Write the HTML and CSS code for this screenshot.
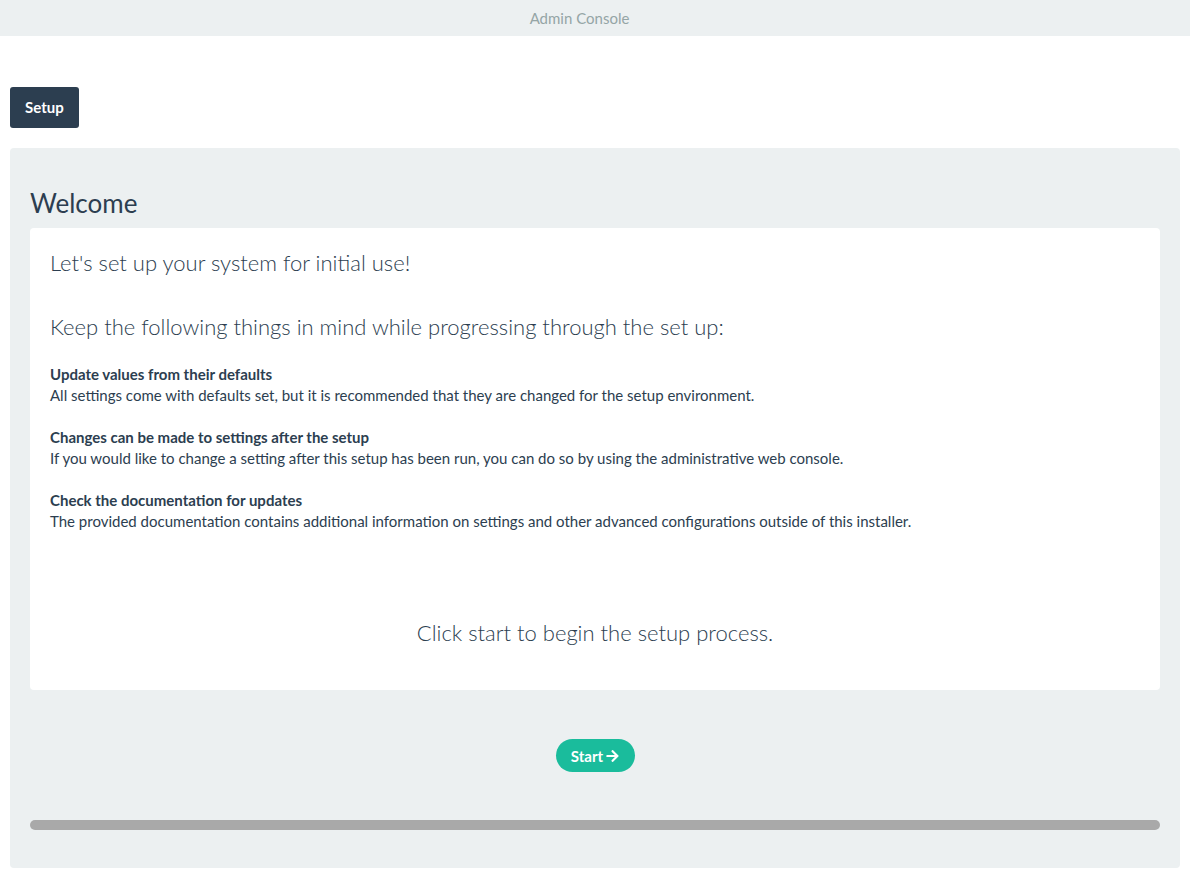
FILE: index.html
```html
<!DOCTYPE html>
<html>
<head>
<meta charset="utf-8">
<link rel="stylesheet" href="styles.css">
</head>
<body>
<header class="topbar">Admin Console</header>
<main class="page">
  <div class="tabs"><button class="tab">Setup</button></div>
  <section class="panel">
    <h1 class="panel-title">Welcome</h1>
    <div class="card">
      <p class="lead">Let's set up your system for initial use!</p>
      <p class="lead lead-2">Keep the following things in mind while progressing through the set up:</p>
      <div class="note">
        <strong>Update values from their defaults</strong>
        <span>All settings come with defaults set, but it is recommended that they are changed for the setup environment.</span>
      </div>
      <div class="note">
        <strong>Changes can be made to settings after the setup</strong>
        <span>If you would like to change a setting after this setup has been run, you can do so by using the administrative web console.</span>
      </div>
      <div class="note">
        <strong>Check the documentation for updates</strong>
        <span>The provided documentation contains additional information on settings and other advanced configurations outside of this installer.</span>
      </div>
      <p class="lead lead-center">Click start to begin the setup process.</p>
    </div>
    <div class="actions">
      <button class="start">Start <svg class="arrow" viewBox="0 0 448 512" width="13" height="14"><path fill="currentColor" d="M190.5 66.9l22.2-22.2c9.4-9.4 24.6-9.4 33.9 0L441 239c9.4 9.4 9.4 24.6 0 33.9L246.6 467.3c-9.4 9.4-24.6 9.4-33.9 0l-22.2-22.2c-9.5-9.5-9.3-25 .4-34.3L311.4 296H24c-13.3 0-24-10.7-24-24v-32c0-13.300 10.7-24 24-24h287.4L190.9 101.2c-9.8-9.3-10-24.8-.4-34.3z"/></svg></button>
    </div>
    <div class="progress"></div>
  </section>
</main>
</body>
</html>
```
FILE: styles.css
```css
* { box-sizing: border-box; }
html, body { margin: 0; padding: 0; }
body {
  font-family: Lato, "Open Sans", sans-serif;
  color: #2c3e50;
  background: #fff;
}
.topbar {
  height: 36px;
  background: #ecf0f1;
  color: #95a5a6;
  font-size: 15px;
  display: flex;
  align-items: center;
  justify-content: center;
  padding-right: 31px;
}
.page {
  padding: 51px 10px 9px;
}
.tabs { display: flex; }
.tab {
  font-family: inherit;
  font-weight: 700;
  font-size: 15px;
  color: #fff;
  background: #2c3e50;
  border: 0;
  border-radius: 3px;
  height: 41px;
  padding: 0 15px;
  line-height: 41px;
}
.panel {
  margin-top: 20px;
  background: #ecf0f1;
  border-radius: 4px;
  padding: 40px 20px 38px;
}
.panel-title {
  margin: 0 0 9px;
  font-size: 26px;
  font-weight: 400;
  line-height: 31px;
}
.card {
  background: #fff;
  border-radius: 4px;
  padding: 20px 20px 42px;
}
.lead {
  margin: 0;
  font-size: 22px;
  font-weight: 300;
  line-height: 30px;
}
.lead-2 { margin-top: 34px; margin-bottom: 22px; }
.note {
  display: flex;
  flex-direction: column;
  font-size: 15px;
  line-height: 21px;
  margin-bottom: 21px;
}
.note strong { font-weight: 700; }
.lead-center {
  text-align: center;
  margin-top: 86px;
}
.actions {
  display: flex;
  justify-content: center;
  padding: 49px 0 48px;
}
.start {
  font-family: inherit;
  font-weight: 700;
  font-size: 15px;
  color: #fff;
  background: #1abc9c;
  border: 0;
  border-radius: 17px;
  height: 33px;
  width: 79px;
  display: flex;
  align-items: center;
  justify-content: center;
  gap: 3px;
  padding: 0;
}
.arrow { display: block; }
.progress {
  height: 10px;
  border-radius: 5px;
  background: #a9a9a9;
}
```
